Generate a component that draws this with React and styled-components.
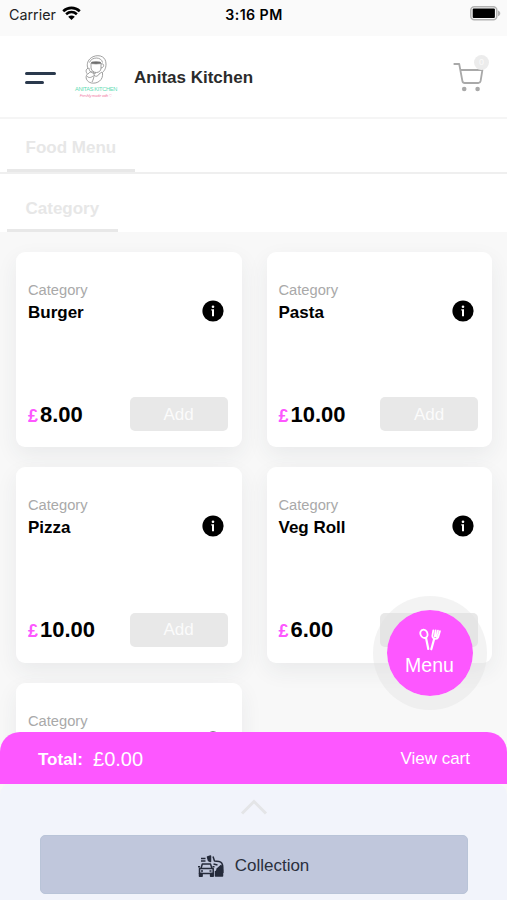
import React from "react";
import styled, { createGlobalStyle } from "styled-components";

const pink = "#fd57ff";

const GlobalStyle = createGlobalStyle`
  * { box-sizing: border-box; }
  body { margin: 0; background: #f8f8f8; }
`;

const Screen = styled.main`
  position: relative;
  width: 507px;
  height: 900px;
  overflow: hidden;
  display: flex;
  flex-direction: column;
  background: #f8f8f8;
  color: #000;
  font-family: "Liberation Sans", Arial, sans-serif;
  white-space: nowrap;
`;

const StatusBar = styled.div`
  flex: none;
  height: 36px;
  padding: 0 6px 8px 9px;
  display: grid;
  grid-template-columns: 1fr auto 1fr;
  align-items: center;
  background: #fafafa;
  font-family: Inter, sans-serif;
  font-size: 14.3px;
`;

const Carrier = styled.span`
  display: flex;
  align-items: center;
  gap: 6px;
  color: #222;
  svg { margin-top: -2px; }
`;

const Clock = styled.span`
  margin-right: 2px;
  font-weight: 600;
  font-size: 14.2px;
  letter-spacing: 0.42px;
`;

const BatterySlot = styled.span`
  display: flex;
  justify-content: flex-end;
  margin-top: -2px;
`;

const Header = styled.header`
  flex: none;
  height: 83px;
  padding: 0 18px 0 25px;
  display: flex;
  align-items: center;
  background: #fff;
  border-bottom: 2px solid #f5f5f5;
`;

const MenuButton = styled.button`
  width: 31px;
  height: 12px;
  padding: 0;
  margin-top: 2px;
  border: 0;
  background: none;
  display: flex;
  flex-direction: column;
  gap: 6px;
`;

const MenuLine = styled.span`
  width: ${(p) => p.$width}px;
  height: 3px;
  border-radius: 2px;
  background: #2a394d;
`;

const Brand = styled.div`
  width: 44px;
  margin: 0 0 1px 18px;
  display: flex;
  flex-direction: column;
  align-items: center;
`;

const BrandName = styled.span`
  margin-top: 2px;
  font: 5.7px/7px "Liberation Sans", sans-serif;
  letter-spacing: -0.33px;
  color: #5fdcb4;
`;

const BrandLine = styled.span`
  font: italic 4px/5px "Liberation Sans", "DejaVu Sans", sans-serif;
  letter-spacing: -0.25px;
  color: #f280a8;
`;

const Title = styled.h1`
  margin: 3px 0 0 16px;
  font-size: 17px;
  font-weight: 700;
  color: #2b2b2b;
`;

const CartButton = styled.button`
  position: relative;
  margin: 0 0 4px auto;
  width: 36px;
  height: 40px;
  padding: 0;
  border: 0;
  background: none;
`;

const CartBadge = styled.span`
  position: absolute;
  top: 0;
  right: 0;
  width: 15px;
  height: 15px;
  border-radius: 50%;
  background: #ececec;
  color: #fafafa;
  font: 9px/15px "Liberation Sans", sans-serif;
  text-align: center;
`;

const TabRow = styled.nav`
  flex: none;
  height: ${(p) => p.$height}px;
  padding-left: 7px;
  display: flex;
  background: #fff;
  border-bottom: ${(p) => (p.$divided ? "2px solid #efefef" : "0")};
`;

const Tab = styled.span`
  padding: ${(p) => p.$top}px 19px 0 18.5px;
  display: flex;
  align-items: center;
  border-bottom: 3px solid #e8e8e8;
  color: #e7e7e7;
  font-size: 17px;
  font-weight: 700;
`;

const MenuGrid = styled.section`
  flex: 1;
  min-height: 0;
  padding: 20px 15px 0 16px;
  display: grid;
  grid-template-columns: 225.5px 225.5px;
  grid-auto-rows: 195.3px;
  column-gap: 25px;
  row-gap: 20px;
`;

const Card = styled.article`
  padding: 28px 14px 16px 12px;
  display: flex;
  flex-direction: column;
  border-radius: 9px;
  background: #fff;
  box-shadow: 0 8px 22px rgba(40, 60, 70, 0.07);
`;

const CardCategory = styled.span`
  height: 20px;
  font-size: 14.7px;
  line-height: 20px;
  color: #a9a9a9;
`;

const CardHeading = styled.div`
  height: 22px;
  padding-right: 4px;
  display: flex;
  align-items: center;
  justify-content: space-between;
`;

const ItemName = styled.h2`
  margin: 3px 0 0;
  font-size: 17px;
  font-weight: 700;
`;

const CardFooter = styled.div`
  margin-top: auto;
  height: 34px;
  display: flex;
  align-items: center;
  justify-content: space-between;
`;

const Price = styled.span`
  display: flex;
  align-items: baseline;
  gap: 2px;
  margin-top: 1px;
  font-size: 22px;
  font-weight: 700;
`;

const Currency = styled.span`
  font-size: 18px;
  font-weight: 700;
  color: ${pink};
`;

const AddButton = styled.button`
  width: 98px;
  height: 34px;
  padding: 1px 0 0;
  border: 0;
  border-radius: 5px;
  background: #e8e8e8;
  color: #fbfbfb;
  font: 17px "Liberation Sans", sans-serif;
`;

const FloatingMenu = styled.button`
  position: absolute;
  left: 373px;
  top: 596px;
  width: 114px;
  height: 114px;
  padding: 0 1px 3px 0;
  border: 14px solid rgba(225, 225, 225, 0.4);
  border-radius: 50%;
  background: ${pink};
  background-clip: padding-box;
  color: #fff;
  font: 19.5px/22px "Liberation Sans", sans-serif;
  display: flex;
  flex-direction: column;
  align-items: center;
  justify-content: center;
  gap: 3px;
`;

const TotalBar = styled.div`
  z-index: 1;
  flex: none;
  height: 52px;
  padding: 2px 37px 0 38px;
  display: flex;
  align-items: center;
  border-radius: 20px 20px 0 0;
  background: ${pink};
  color: #fff;
`;

const TotalLabel = styled.span`
  margin-top: 1px;
  font-size: 17px;
  font-weight: 700;
`;

const TotalAmount = styled.span`
  margin-left: 10px;
  font-size: 20px;
`;

const CartLink = styled.span`
  margin-left: auto;
  font-size: 17px;
`;

const Sheet = styled.footer`
  z-index: 1;
  flex: none;
  height: 116px;
  padding-top: 14px;
  display: flex;
  flex-direction: column;
  align-items: center;
  border-radius: 10px 10px 0 0;
  background: #f2f4fb;
`;

const CollectionButton = styled.button`
  width: 428px;
  height: 59px;
  margin-top: 20px;
  padding: 2px 0 0 0;
  border: 1px solid #b9c4d8;
  border-radius: 5px;
  background: #c0c7dc;
  color: #2b303d;
  font: 17px "Liberation Sans", sans-serif;
  display: flex;
  align-items: center;
  justify-content: center;
  gap: 11px;
`;

const WifiIcon = () => (
  <svg width="19" height="15" viewBox="0 0 19 15" fill="none" stroke="#000" strokeWidth="2.6">
    <path d="M1.2 5.2C6 .8 13 .8 17.8 5.2M4.1 8.2c3.2-2.8 7.6-2.8 10.8 0" />
    <path d="M6.2 10.7c2-1.7 4.6-1.7 6.6 0L9.5 14z" fill="#000" stroke="none" />
  </svg>
);

const BatteryIcon = () => (
  <svg width="31" height="15" viewBox="0 0 31 15">
    <rect x=".8" y=".8" width="26" height="13" rx="3.5" fill="#fafafa" stroke="#b2b2b2" strokeWidth="1.5" />
    <rect x="2.700" y="2.600" width="22.200" height="9.400" rx="1" fill="#000" />
    <path d="M28 4.500c3 1 3 4.800 0 5.800z" fill="#b2b2b2" />
  </svg>
);

const CookMark = () => (
  <svg width="24" height="30" viewBox="0 0 24 30" fill="none" stroke="#888" strokeWidth=".8">
    <path d="M4 15C-1 1 22-4 22 10c0 5-2 7-4 9" />
    <path d="M5.500 8.500c2-6 12-6 13 0" />
    <path d="M7 9h10v5c0 6-9 6-10 0zM17 10c4-1 3 4 0 4" />
    <ellipse cx="12" cy="8.800" rx="5" ry="1.100" fill="#666" />
    <path d="M4.500 14c-3 1-3 4-1 6-3 3-1 8 4 9 6 1 12-3 11-10M4 20c2-3 6-3 6 0s4 3 5 0l3-2M5 14c0 4 4 6 7 5M9 22c-2 2-5 2-6 0M10 21c0 3-1 5-2 7" />
  </svg>
);

const CartIcon = () => (
  <svg width="36" height="40" viewBox="0 0 36 40" fill="none" stroke="#a9a9a9" strokeWidth="1.800" strokeLinecap="round" strokeLinejoin="round">
    <path d="M1.300 9h4.900l3.200 17c.3 1.500 1 2 2.300 2h13.600c1.400 0 2-.6 2.300-2l1.800-11H7.400" />
    <circle cx="11.200" cy="34" r="2.300" fill="#a9a9a9" stroke="none" />
    <circle cx="24.600" cy="34" r="2.300" fill="#a9a9a9" stroke="none" />
  </svg>
);

const InfoIcon = () => (
  <svg width="22" height="22" viewBox="0 0 22 22">
    <circle cx="11" cy="11" r="10.600" fill="#000" />
    <circle cx="11" cy="6.800" r="1.300" fill="#fff" />
    <path d="M9.300 9.300h2.700v7h-2v-5.700h-.7z" fill="#fff" />
  </svg>
);

const CutleryIcon = () => (
  <svg width="22" height="23" viewBox="0 0 22 23" fill="none" stroke="#fff" strokeWidth="1.800" strokeLinecap="round" strokeLinejoin="round">
    <path d="M1.500 3.700C2.500 1 6.300.7 7.800 3.700c1.300 2.600.9 5.200-.9 6-3.300 1.300-6.400-2.500-5.400-6z" />
    <path d="M7 9.800 9.300 21M15 11.500 12.300 21.300" strokeWidth="2.200" />
    <path d="m14.300 2.300-.9 5.400c-.3 3.200 4.600 4.400 5.800 1.500l1.700-6M16.600 2.300l-.8 6M18.900 2.600l-1.500 6" />
  </svg>
);

const ChevronIcon = () => (
  <svg width="28" height="17" viewBox="0 0 28 17" fill="none" stroke="#e4e5e7" strokeWidth="3">
    <path d="m2 15.500 12-12 12 12" />
  </svg>
);

const PickupIcon = () => (
  <svg width="26" height="22" viewBox="0 0 26 22" fill="none" stroke="#252b3b" strokeWidth="1.500" strokeLinejoin="round">
    <path d="M3 13.500 4.300 9h8.200l1.500 4.500M1.500 13.500h13.700v5H1.500z" />
    <path d="M1.500 18.500h2.600v2.700H1.500zM12.600 18.500h2.600v2.700h-2.600z" fill="#252b3b" />
    <path d="M3 16h2M11.500 16h2M0 11.700h2M14.500 11.700h2" />
    <path d="M3 3.500h4.500M3 6h4.500" strokeWidth="1.500" />
    <path d="m9.500 2 3-1v5.500l-2-1z" fill="#252b3b" />
    <path d="M15 1.500 16.500 6l4.500.5c3 .5 3.800 2.800 3.800 6V18" />
    <path d="m15.500 9 4 1M18.500 14.500l4.500-4 1.500 4.500v6h-7v-5" fill="#252b3b" />
  </svg>
);

const items = [
  { name: "Burger", price: "8.00" },
  { name: "Pasta", price: "10.00" },
  { name: "Pizza", price: "10.00" },
  { name: "Veg Roll", price: "6.00" },
  { name: "", price: "" },
];

const MenuCard = ({ name, price }) => (
  <Card>
    <CardCategory>Category</CardCategory>
    <CardHeading>
      <ItemName>{name}</ItemName>
      <InfoIcon />
    </CardHeading>
    {price && (
      <CardFooter>
        <Price>
          <Currency>£</Currency>
          {price}
        </Price>
        <AddButton>Add</AddButton>
      </CardFooter>
    )}
  </Card>
);

export default function App() {
  return (
    <>
      <GlobalStyle />
      <Screen>
        <StatusBar>
          <Carrier>Carrier <WifiIcon /></Carrier>
          <Clock>3:16 PM</Clock>
          <BatterySlot><BatteryIcon /></BatterySlot>
        </StatusBar>
        <Header>
          <MenuButton>
            <MenuLine $width={31} />
            <MenuLine $width={19} />
          </MenuButton>
          <Brand>
            <CookMark />
            <BrandName>ANITAS KITCHEN</BrandName>
            <BrandLine>Freshly made with ♡</BrandLine>
          </Brand>
          <Title>Anitas Kitchen</Title>
          <CartButton>
            <CartIcon />
            <CartBadge>0</CartBadge>
          </CartButton>
        </Header>
        <TabRow $height={55} $divided>
          <Tab $top={8}>Food Menu</Tab>
        </TabRow>
        <TabRow $height={58}>
          <Tab $top={14}>Category</Tab>
        </TabRow>
        <MenuGrid>
          {items.map((item, i) => <MenuCard key={i} {...item} />)}
        </MenuGrid>
        <FloatingMenu>
          <CutleryIcon />
          Menu
        </FloatingMenu>
        <TotalBar>
          <TotalLabel>Total:</TotalLabel>
          <TotalAmount>£0.00</TotalAmount>
          <CartLink>View cart</CartLink>
        </TotalBar>
        <Sheet>
          <ChevronIcon />
          <CollectionButton>
            <PickupIcon />
            Collection
          </CollectionButton>
        </Sheet>
      </Screen>
    </>
  );
}
